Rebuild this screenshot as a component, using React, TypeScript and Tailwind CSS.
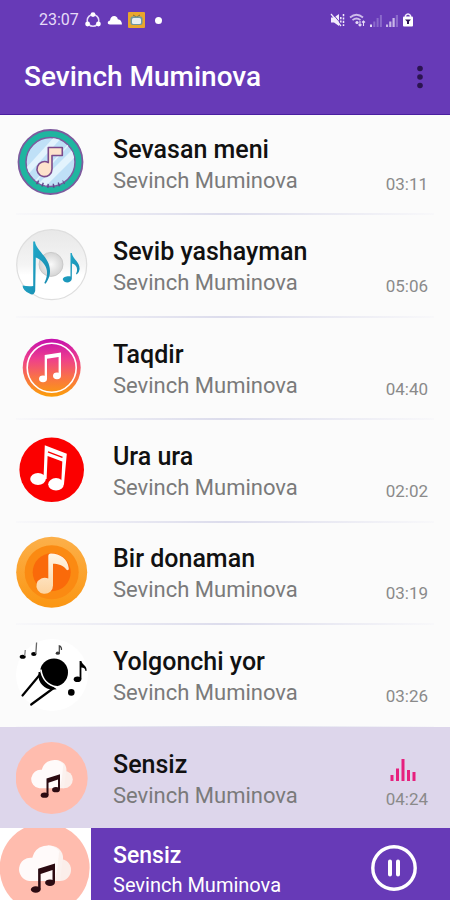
import type { ReactNode } from "react";

type Track = { title: string; artist: string; time: string; art: ReactNode; playing?: boolean };

function Badge() {
  return (
    <svg viewBox="0 0 72 72" className="size-[72px]" aria-hidden="true">
      <defs>
        <clipPath id="badge-face">
          <circle cx="34.5" cy="35" r="24" />
        </clipPath>
      </defs>
      <circle cx="34.5" cy="35" r="32" fill="#1fb5a0" stroke="#7d5a9e" strokeWidth="1.8" />
      <circle cx="34.5" cy="35" r="24.5" fill="#bfe0f7" stroke="#7d5a9e" strokeWidth="1.5" />
      <g clipPath="url(#badge-face)" stroke="#e2f3fd">
        <path d="M4 52 L44 8" strokeWidth="6" />
        <path d="M22 62 L64 20" strokeWidth="7" />
        <path d="M18 56 L56 14" strokeWidth="1.5" />
      </g>
      <path
        d="M32.3 20.5 H46.3 V28.5 H36 V42 A7.5 7.5 0 1 1 32.3 35.6 Z"
        fill="#fde3cc"
        stroke="#7b4b8c"
        strokeWidth="1.6"
        strokeLinejoin="round"
      />
      <path d="M21 55 A25 25 0 0 0 48 55" fill="none" stroke="#5f4a8c" strokeWidth="4" strokeDasharray="1.5 4" />
    </svg>
  );
}

function Disc() {
  return (
    <svg viewBox="0 0 72 72" className="size-[72px]" aria-hidden="true">
      <defs>
        <linearGradient id="disc" x1="0" y1="0" x2="0" y2="1">
          <stop offset="0" stopColor="#e8e8e8" />
          <stop offset="0.5" stopColor="#f4f4f4" />
          <stop offset="0.65" stopColor="#ffffff" />
        </linearGradient>
        <radialGradient id="hub">
          <stop offset="0" stopColor="#fafafa" />
          <stop offset="1" stopColor="#d4d4d4" />
        </radialGradient>
        <linearGradient id="disc-note" x1="0" y1="0" x2="1" y2="1">
          <stop offset="0" stopColor="#22b0cf" />
          <stop offset="1" stopColor="#1787ad" />
        </linearGradient>
      </defs>
      <circle cx="35.7" cy="35.7" r="35" fill="url(#disc)" stroke="#dedede" strokeWidth="1.2" />
      <circle cx="35" cy="35.4" r="12" fill="url(#hub)" stroke="#c4c4c4" strokeWidth="0.8" />
      <path
        d="M17.2 12.5 H19 C20 22 34 28 34 42 C34 48 31.5 52 29.5 54.8 L28.3 54 C31 48 33 42 28 35 C25 31 22 29 19.8 28.5 L19.2 62 Q17.5 67.5 13.5 64.5 Q7 62 6.5 56.6 Q12 57.5 17.2 57 Z"
        fill="url(#disc-note)"
      />
      <path
        d="M54.5 24 H55.8 C56.5 30 63.8 32.5 63.6 40 Q63.2 44 60.8 45.5 L60 44.8 C62.5 40 60.5 35.5 56 34.5 L55.8 50 C55 54.5 48 54.5 46.8 50.5 C47 47.8 51 47 54.5 47.5 Z"
        fill="url(#disc-note)"
      />
    </svg>
  );
}

function Sunset() {
  return (
    <svg viewBox="0 0 72 72" className="size-[72px]" aria-hidden="true">
      <defs>
        <linearGradient id="sunset" x1="0" y1="0" x2="0" y2="1">
          <stop offset="0" stopColor="#c40fae" />
          <stop offset="0.35" stopColor="#ee3f8c" />
          <stop offset="0.65" stopColor="#f9704a" />
          <stop offset="1" stopColor="#fb9f08" />
        </linearGradient>
      </defs>
      <circle cx="35.7" cy="35.7" r="29" fill="url(#sunset)" />
      <circle cx="35.7" cy="35.7" r="24.5" fill="none" stroke="#fff" strokeWidth="1.6" />
      <g fill="#fff">
        <path d="M28.7 23 L45 20.5 V44 H42.6 V25 L31 26.8 V47 H28.7 Z" />
        <ellipse cx="27" cy="46.8" rx="4" ry="3.4" />
        <ellipse cx="41" cy="43.8" rx="4" ry="3.4" />
      </g>
    </svg>
  );
}

function RedNotes() {
  return (
    <svg viewBox="0 0 72 72" className="size-[72px]" aria-hidden="true">
      <circle cx="35.7" cy="35.8" r="32.3" fill="#fb0000" />
      <g fill="#fff">
        <path d="M28.8 11.3 L50.8 19.8 L48 50 H45.2 L46.3 27.5 L31.6 22 L30.6 45 H27.5 Z" />
        <ellipse cx="22" cy="45" rx="7.8" ry="6" />
        <ellipse cx="40" cy="50.3" rx="7.8" ry="6.2" />
      </g>
      <path d="M32 17.8 L46.5 23.3" stroke="#fb0000" strokeWidth="1.4" />
    </svg>
  );
}

function OrangeNote() {
  return (
    <svg viewBox="0 0 72 72" className="size-[72px]" aria-hidden="true">
      <defs>
        <linearGradient id="amber" x1="0" y1="0" x2="0" y2="1">
          <stop offset="0" stopColor="#fcb04a" />
          <stop offset="1" stopColor="#fb9612" />
        </linearGradient>
        <linearGradient id="cream" x1="0" y1="0" x2="0" y2="1">
          <stop offset="0" stopColor="#fff6e6" />
          <stop offset="1" stopColor="#fdd3a0" />
        </linearGradient>
      </defs>
      <circle cx="35.7" cy="36.2" r="35.5" fill="url(#amber)" />
      <circle cx="35.7" cy="36.2" r="27" fill="#fb8a12" />
      <circle cx="35.7" cy="36.2" r="19" fill="#fa6a0a" />
      <path
        d="M32.3 20 Q32.3 17.5 35 17.5 C44 18 51.5 22 52.8 32.5 Q52.8 35 50.5 33.8 C47 29 42 27.8 37 27.8 V49.5 A8.3 8 0 1 1 32.3 42.6 Z"
        fill="url(#cream)"
      />
    </svg>
  );
}

function Microphone() {
  return (
    <svg viewBox="0 0 72 72" className="size-[72px]" aria-hidden="true">
      <circle cx="36" cy="36" r="36" fill="#fff" />
      <circle cx="38" cy="33.5" r="14" />
      <path d="M23.5 34 C22.5 43 29 50 38 49.5 L35.5 47.5 C29 46 25 41 24.5 34 Z" stroke="#000" strokeWidth="2" />
      <path d="M24.8 30.5 C26 40 32 46.5 41 48" fill="none" stroke="#fff" strokeWidth="1.8" />
      <g fill="none" stroke="#000" strokeWidth="2.2" strokeLinecap="round">
        <path d="M24 35.5 L6.5 56.5" />
        <path d="M37 49.5 L15.2 65.5" />
      </g>
      <circle cx="55.3" cy="53.4" r="3.3" />
      <g>
        <ellipse cx="61.5" cy="40.2" rx="3.8" ry="2.8" />
        <path d="M63.6 22 H65.4 C66 26 71.5 26.5 70.5 32 H69.5 C69.5 29.5 67.5 28.5 65.4 28.5 V40 H63.6 Z" />
        <ellipse cx="6.7" cy="17.7" rx="3" ry="2" />
        <path d="M8.6 17 L9.3 11" stroke="#777" strokeWidth="1.2" />
        <ellipse cx="17.8" cy="15" rx="2.7" ry="2" />
        <path d="M19.8 15 L20.6 3.5" stroke="#666" strokeWidth="1.3" />
        <ellipse cx="41.8" cy="14.2" rx="2.1" ry="1.6" fill="#333" />
        <path d="M43.3 14 V6.8 Q45.8 7.5 45.5 11" fill="none" stroke="#444" strokeWidth="1.2" />
      </g>
    </svg>
  );
}

function CloudNotes({ viewBox, className }: { viewBox: string; className: string }) {
  return (
    <svg viewBox={viewBox} className={className} aria-hidden="true">
      <circle cx="35.7" cy="36" r="36" fill="#ffbcae" />
      <circle cx="48" cy="37.5" r="8.8" fill="#fbeeea" />
      <path d="M38.3 18 C48 17.5 52 25 50 31 L48 46.3 H38 Z" fill="#fbf1ee" />
      <path d="M23.3 46.3 A9.3 9.3 0 1 1 25.8 27.8 A12.5 12.5 0 0 1 47.5 22.5 C46 30 47 38 43 46.3 Z" fill="#fffafa" />
      <g fill="#2c0b12">
        <path d="M30.5 36.6 L44 32.3 V47.5 H42 V37.6 L32.5 40.8 V53 H30.5 Z" />
        <ellipse cx="28.6" cy="53.2" rx="3.9" ry="2.6" />
        <ellipse cx="40" cy="47.7" rx="3.9" ry="2.6" />
      </g>
    </svg>
  );
}

const tracks: Track[] = [
  { title: "Sevasan meni", artist: "Sevinch Muminova", time: "03:11", art: <Badge /> },
  { title: "Sevib yashayman", artist: "Sevinch Muminova", time: "05:06", art: <Disc /> },
  { title: "Taqdir", artist: "Sevinch Muminova", time: "04:40", art: <Sunset /> },
  { title: "Ura ura", artist: "Sevinch Muminova", time: "02:02", art: <RedNotes /> },
  { title: "Bir donaman", artist: "Sevinch Muminova", time: "03:19", art: <OrangeNote /> },
  { title: "Yolgonchi yor", artist: "Sevinch Muminova", time: "03:26", art: <Microphone /> },
  {
    title: "Sensiz",
    artist: "Sevinch Muminova",
    time: "04:24",
    art: <CloudNotes viewBox="0 0 72 72" className="size-[72px]" />,
    playing: true,
  },
];

function StatusBar() {
  return (
    <div className="flex h-10 items-center justify-between pr-9 pl-[39px] text-[#e6dcf7]">
      <div className="flex items-center gap-[5px]">
        <span className="text-base leading-5">23:07</span>
        <svg viewBox="0 0 18 18" className="size-[18px]" aria-hidden="true">
          <circle cx="9" cy="9.5" r="5.8" fill="none" stroke="#e6dcf7" strokeWidth="1.5" />
          <g fill="#fff">
            <circle cx="9" cy="3.6" r="2.4" />
            <circle cx="3.6" cy="13" r="2.4" />
            <circle cx="14.4" cy="13" r="2.4" />
          </g>
        </svg>
        <svg viewBox="0 0 16 10" className="h-[10px] w-4" aria-hidden="true">
          <path d="M3 9.5 Q0.5 9.5 0.8 7.3 Q1.3 5.6 3 5.6 Q3.6 1 7.2 1 Q10.3 1.2 10.8 4.2 Q14.8 4.8 15 9.5 Z" fill="#fff" />
        </svg>
        <svg viewBox="0 0 17 16" className="h-4 w-[17px]" aria-hidden="true">
          <rect width="17" height="16" rx="1" fill="#e9a62c" />
          <path d="M5 3 L8.5 5 L12 3" fill="none" stroke="#7b6a3a" strokeWidth="1" />
          <rect x="2.5" y="4.5" width="12" height="8.5" rx="2" fill="#6f98a0" />
          <rect x="4" y="6" width="9" height="6" rx="1.5" fill="#e8eef0" />
        </svg>
        <span className="ml-[5px] size-[7px] rounded-full bg-white" />
      </div>
      <div className="flex items-center gap-1">
        <svg viewBox="0 0 15 14" className="h-[14px] w-[15px]" aria-hidden="true">
          <path d="M1 4.5 H4 L9 1 V13 L4 9.5 H1 Z" fill="#f2ecfb" />
          <path d="M2 0 L12 12" stroke="#673ab7" strokeWidth="1" />
          <path d="M1 1 L11 13" stroke="#f2ecfb" strokeWidth="1.2" />
          <path d="M10.8 4 V10 M13.5 1 V13" stroke="#f2ecfb" strokeWidth="1.5" strokeDasharray="2.2 1.2" />
        </svg>
        <svg viewBox="0 0 17 14" className="h-[14px] w-[17px]" aria-hidden="true">
          <g fill="none" stroke="#cdbcea" strokeWidth="1.7">
            <path d="M1 4.5 Q7.5 -1 14 4.5" />
            <path d="M3.5 7.2 Q7.5 3.8 11.5 7.2" />
          </g>
          <circle cx="8" cy="9.5" r="1.6" fill="#e6dcf7" />
          <path d="M11 8 V13 M9.5 11.5 L11 13 L12.5 11.5 M14.5 13 V8 M13 9.5 L14.5 8 L16 9.5" fill="none" stroke="#e6dcf7" strokeWidth="1.1" />
        </svg>
        <svg viewBox="0 0 12 13" className="h-[13px] w-3" aria-hidden="true">
          <path d="M1 13 V10.5" stroke="#e6dcf7" strokeWidth="2" />
          <path d="M4.3 13 V7.5 M7.6 13 V4 M10.9 13 V1" stroke="#8b6acb" strokeWidth="2" />
        </svg>
        <svg viewBox="0 0 12 13" className="h-[13px] w-3" aria-hidden="true">
          <path d="M1 13 V10.5 M4.3 13 V7.5 M7.6 13 V4" stroke="#c9b8e8" strokeWidth="2.2" />
          <path d="M10.9 13 V1" stroke="#8b6acb" strokeWidth="2.2" />
        </svg>
        <svg viewBox="0 0 12 14" className="h-[14px] w-3" aria-hidden="true">
          <path d="M3.5 4 V2.5 Q6 -0.5 8.5 2.5 V4" fill="none" stroke="#f2ecfb" strokeWidth="1.4" />
          <rect x="1" y="3.5" width="10" height="10" rx="1" fill="#fff" />
          <path d="M3 6.5 H9 L7 8.5 V11 H5 V8.5 Z" fill="#2c1552" />
        </svg>
      </div>
    </div>
  );
}

export default function App() {
  return (
    <div className="flex min-h-screen flex-col bg-[#fbfbfb] font-[Roboto,sans-serif]">
      <header className="sticky top-0 z-10 flex h-[115px] flex-col border-b border-[#4a1fa0] bg-[#673ab7]">
        <StatusBar />
        <div className="flex flex-1 items-center justify-between pr-4 pl-6">
          <h1 className="text-[28px] leading-8 font-medium text-white">Sevinch Muminova</h1>
          <button type="button" aria-label="More options" className="flex h-10 w-7 items-center justify-center">
            <svg viewBox="0 0 6 24" className="h-6 w-[6px]" fill="#2b1450" aria-hidden="true">
              <circle cx="3" cy="3.5" r="2.8" />
              <circle cx="3" cy="12" r="2.8" />
              <circle cx="3" cy="20.5" r="2.8" />
            </svg>
          </button>
        </div>
      </header>

      <ul className="-mt-[3px] grid flex-1 auto-rows-fr">
        {tracks.map((track) => (
          <li key={track.title} className={track.playing ? "flex flex-col bg-[#ddd6eb]" : "flex flex-col"}>
            <button type="button" className="flex w-full flex-1 items-center gap-[25px] pr-[22px] pl-4 text-left">
              {track.art}
              <span className="flex flex-1 flex-col pt-1">
                <span className="text-[25px] leading-8 font-medium text-[#111111]">{track.title}</span>
                <span className="text-[22px] leading-[30px] text-[#7a7a7a]">{track.artist}</span>
              </span>
              <span className="flex h-[62px] flex-col items-end justify-end text-[17px] leading-5 text-[#8a8a8a]">
                {track.playing && (
                  <svg viewBox="0 0 26 22" className="mr-3 mb-2 h-[22px] w-[26px]" aria-hidden="true">
                    <path d="M2 22 V16 M7.5 22 V9.5 M13 22 V0 M18.5 22 V11 M24 22 V13" stroke="#e6207e" strokeWidth="3" />
                  </svg>
                )}
                {track.time}
              </span>
            </button>
            {!track.playing && (
              <div className="mx-4 -mb-px h-[2px] bg-linear-to-r from-[#f8f8fa] via-[#dcdcec] to-[#f8f8fa]" />
            )}
          </li>
        ))}
      </ul>

      <footer className="sticky bottom-0 z-10 -mt-px flex h-[72px] items-center overflow-hidden bg-[#673ab7] pr-8 text-white">
        <div className="h-[72px] w-[91px] bg-white">
          <CloudNotes viewBox="0 4 72 57.6" className="h-[72px] w-[90px]" />
        </div>
        <div className="flex flex-1 flex-col pt-[9px] pl-[22px]">
          <span className="text-[23px] leading-8 font-medium">Sensiz</span>
          <span className="text-xl leading-[26px]">Sevinch Muminova</span>
        </div>
        <button type="button" aria-label="Pause" className="mt-[7px] size-12">
          <svg viewBox="0 0 48 48" className="size-12" fill="none" stroke="#fff" aria-hidden="true">
            <circle cx="24" cy="24" r="21.2" strokeWidth="3.4" />
            <path d="M20 17.5 V30.5 M28 17.5 V30.5" strokeWidth="4" strokeLinecap="round" />
          </svg>
        </button>
      </footer>
    </div>
  );
}
